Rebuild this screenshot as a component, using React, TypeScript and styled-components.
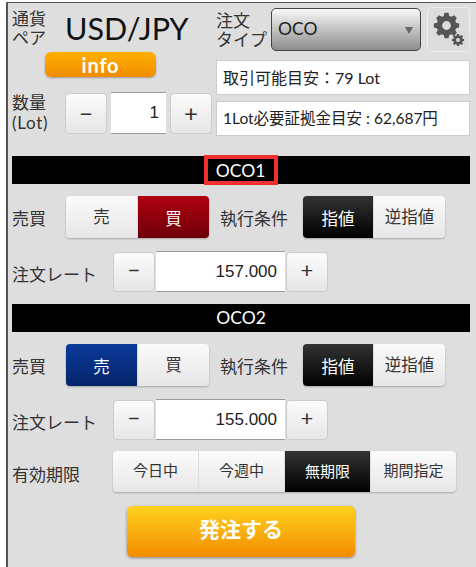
import styled, { createGlobalStyle } from "styled-components";

const gearPath = (cx: number, cy: number, outer: number, inner: number, hole: number) => {
  const teeth = 8;
  const pts: string[] = [];
  for (let i = 0; i < teeth; i++) {
    const a = (i / teeth) * Math.PI * 2;
    const step = (Math.PI * 2) / teeth;
    const list: [number, number][] = [
      [inner, a - step * 0.36],
      [outer, a - step * 0.2],
      [outer, a + step * 0.2],
      [inner, a + step * 0.36],
    ];
    list.forEach(([r, t]) => {
      pts.push(`${(cx + r * Math.cos(t)).toFixed(2)} ${(cy + r * Math.sin(t)).toFixed(2)}`);
    });
  }
  const ring = `M${cx - hole} ${cy}a${hole} ${hole} 0 1 0 ${hole * 2} 0a${hole} ${hole} 0 1 0 ${-hole * 2} 0Z`;
  return `M${pts.join("L")}Z${ring}`;
};

const Gear = () => (
  <svg width="32" height="36" viewBox="0 0 32 36">
    <path fillRule="evenodd" fill="#555" d={gearPath(13.5, 13.5, 12.8, 10, 4.4)} />
    <path fillRule="evenodd" fill="#555" d={gearPath(25, 28, 6.2, 4.7, 2)} />
  </svg>
);

const App = () => (
  <>
    <GlobalStyle />
    <Panel>
      <TopSection>
        <TopLeft>
          <PairRow>
            <SmallLabel $lh={19}>
              通貨
              <br />
              ペア
            </SmallLabel>
            <PairName>USD/JPY</PairName>
          </PairRow>
          <InfoButton>info</InfoButton>
          <QuantityRow>
            <SmallLabel $lh={20}>
              数量
              <br />
              <LotText>(Lot)</LotText>
            </SmallLabel>
            <QtyButton>−</QtyButton>
            <QtyInput>1</QtyInput>
            <QtyButton>+</QtyButton>
          </QuantityRow>
        </TopLeft>
        <TopRight>
          <TypeRow>
            <TypeLabel>
              注文
              <br />
              タイプ
            </TypeLabel>
            <SelectBox>
              OCO
              <SelectArrow />
            </SelectBox>
            <GearButton>
              <Gear />
            </GearButton>
          </TypeRow>
          <InfoBox $top={8} $size={16}>
            取引可能目安：79 Lot
          </InfoBox>
          <InfoBox $top={6} $size={15.5}>
            1Lot必要証拠金目安 : 62,687円
          </InfoBox>
        </TopRight>
      </TopSection>

      <Bar $top={22}>
        <Highlighted>OCO1</Highlighted>
      </Bar>
      <OrderRow $top={12}>
        <RowLabel $width={54}>売買</RowLabel>
        <Segment>
          <SegItem $w={72}>売</SegItem>
          <SegItem $w={71} $tone="red">
            買
          </SegItem>
        </Segment>
        <MidLabel>執行条件</MidLabel>
        <Segment>
          <SegItem $w={71} $tone="black">
            指値
          </SegItem>
          <SegItem $w={71}>逆指値</SegItem>
        </Segment>
      </OrderRow>
      <OrderRow $top={13}>
        <RateLabel>注文レート</RateLabel>
        <Stepper>−</Stepper>
        <RateInput>157.000</RateInput>
        <Stepper>+</Stepper>
      </OrderRow>

      <Bar $top={12}>OCO2</Bar>
      <OrderRow $top={12}>
        <RowLabel $width={54}>売買</RowLabel>
        <Segment>
          <SegItem $w={72} $tone="blue">
            売
          </SegItem>
          <SegItem $w={71}>買</SegItem>
        </Segment>
        <MidLabel>執行条件</MidLabel>
        <Segment>
          <SegItem $w={71} $tone="black">
            指値
          </SegItem>
          <SegItem $w={71}>逆指値</SegItem>
        </Segment>
      </OrderRow>
      <OrderRow $top={13}>
        <RateLabel>注文レート</RateLabel>
        <Stepper>−</Stepper>
        <RateInput>155.000</RateInput>
        <Stepper>+</Stepper>
      </OrderRow>
      <OrderRow $top={11}>
        <RateLabel>有効期限</RateLabel>
        <Segment>
          <SegItem $w={86} $small>
            今日中
          </SegItem>
          <SegItem $w={86} $small>
            今週中
          </SegItem>
          <SegItem $w={86} $small $tone="black">
            無期限
          </SegItem>
          <SegItem $w={85} $small>
            期間指定
          </SegItem>
        </Segment>
      </OrderRow>
      <SubmitButton>発注する</SubmitButton>
    </Panel>
  </>
);

const GlobalStyle = createGlobalStyle`
  html, body {
    margin: 0;
    background: #fff;
  }
  body {
    font-family: Lato, "Noto Sans CJK JP", sans-serif;
    color: #222;
  }
`;

const lightGradient = "linear-gradient(#fbfbfb, #e6e6e6)";

const Panel = styled.div`
  box-sizing: border-box;
  margin: 2px 0 0 6px;
  height: 565px;
  padding: 0 6px 0 4px;
  background: #dedede;
  border-top: 1px solid #555;
  border-left: 2px solid #555;
  overflow: hidden;
`;

const TopSection = styled.div`
  display: flex;
  height: 131px;
`;

const TopLeft = styled.div`
  width: 204px;
  display: flex;
  flex-direction: column;
`;

const TopRight = styled.div`
  width: 254px;
  display: flex;
  flex-direction: column;
  padding-top: 4px;
`;

const PairRow = styled.div`
  display: flex;
  align-items: center;
  height: 47px;
  padding-top: 3px;
`;

const SmallLabel = styled.div<{ $lh: number }>`
  width: 53px;
  flex-shrink: 0;
  font-size: 17px;
  line-height: ${(p) => p.$lh}px;
  color: #333;
`;

const LotText = styled.span`
  letter-spacing: 0.7px;
`;

const PairName = styled.div`
  font-size: 30.5px;
  line-height: 36px;
  color: #111;
  white-space: nowrap;
`;

const InfoButton = styled.div`
  width: 111px;
  height: 25px;
  margin: 3px 0 0 33px;
  border-radius: 6px;
  background: linear-gradient(#ffb000, #f08c00);
  box-shadow: 0 1px 2px rgba(0, 0, 0, 0.3);
  color: #fff;
  font-size: 20px;
  font-weight: 700;
  letter-spacing: 0.8px;
  line-height: 27px;
  text-align: center;
`;

const QuantityRow = styled.div`
  display: flex;
  align-items: center;
  margin-top: 15px;
`;

const QtyButton = styled.div`
  box-sizing: border-box;
  width: 42px;
  height: 41px;
  border: 1px solid #ccc;
  border-radius: 4px;
  background: ${lightGradient};
  font-size: 24px;
  line-height: 37px;
  text-align: center;
  color: #333;
`;

const QtyInput = styled.div`
  box-sizing: border-box;
  width: 55px;
  height: 42px;
  margin: 0 4px;
  padding-right: 7px;
  background: #fff;
  border-top: 1px solid #999;
  border-bottom: 1px solid #999;
  font-family: "Liberation Sans", sans-serif;
  font-size: 17px;
  line-height: 40px;
  text-align: right;
  color: #222;
`;

const TypeRow = styled.div`
  display: flex;
  align-items: center;
  height: 45px;
`;

const TypeLabel = styled.div`
  width: 55px;
  flex-shrink: 0;
  font-size: 17px;
  line-height: 19px;
  color: #333;
`;

const SelectBox = styled.div`
  box-sizing: border-box;
  position: relative;
  width: 151px;
  height: 43px;
  padding-left: 6px;
  border: 1px solid #444;
  border-radius: 5px;
  background: linear-gradient(#f8f8f8, #8c8c8c);
  font-size: 17.5px;
  line-height: 39px;
  color: #222;
`;

const SelectArrow = styled.span`
  position: absolute;
  top: 18px;
  right: 7px;
  border-left: 4px solid transparent;
  border-right: 4px solid transparent;
  border-top: 7px solid #666;
`;

const GearButton = styled.div`
  box-sizing: border-box;
  width: 43px;
  height: 45px;
  margin-left: 6px;
  display: flex;
  align-items: center;
  justify-content: center;
  border: 1px solid #eee;
  border-radius: 5px;
  background: #dcdcdc;
`;

const InfoBox = styled.div<{ $top: number; $size: number }>`
  box-sizing: border-box;
  height: 35px;
  margin-top: ${(p) => p.$top}px;
  padding-left: 6px;
  background: #fff;
  border: 1px solid #ccc;
  font-size: ${(p) => p.$size}px;
  line-height: 33px;
  color: #222;
  white-space: nowrap;
`;

const Bar = styled.div<{ $top: number }>`
  width: 458px;
  height: 28px;
  margin-top: ${(p) => p.$top}px;
  display: flex;
  align-items: center;
  justify-content: center;
  background: #000;
  color: #fff;
  font-size: 17.5px;
  line-height: 26px;
`;

const Highlighted = styled.span`
  box-sizing: border-box;
  width: 74px;
  height: 30px;
  border: 4px solid #f03030;
  text-align: center;
  line-height: 23px;
  margin-left: -1px;
`;

const OrderRow = styled.div<{ $top: number }>`
  display: flex;
  align-items: center;
  margin-top: ${(p) => p.$top}px;
`;

const RowLabel = styled.div<{ $width: number }>`
  width: ${(p) => p.$width}px;
  flex-shrink: 0;
  font-size: 17px;
  color: #333;
  white-space: nowrap;
`;

const RateLabel = styled.div`
  width: 101px;
  flex-shrink: 0;
  padding-top: 4px;
  font-size: 17px;
  color: #333;
  white-space: nowrap;
`;

const MidLabel = styled.div`
  width: 83px;
  margin-left: 11px;
  font-size: 17px;
  color: #333;
  white-space: nowrap;
`;

const Segment = styled.div`
  display: flex;
  border-radius: 4px;
  overflow: hidden;
  box-shadow: 0 1px 2px rgba(0, 0, 0, 0.25);
`;

const toneBg = {
  red: "linear-gradient(#b00010, #6e0008)",
  blue: "linear-gradient(#0a3a9a, #05246a)",
  black: "linear-gradient(#333, #000)",
};

const SegItem = styled.div<{ $w: number; $tone?: keyof typeof toneBg; $small?: boolean }>`
  box-sizing: border-box;
  width: ${(p) => p.$w}px;
  height: ${(p) => (p.$small ? 41 : 42)}px;
  padding-top: ${(p) => (p.$tone ? (p.$small ? 1 : 2) : 0)}px;
  background: ${(p) => (p.$tone ? toneBg[p.$tone] : lightGradient)};
  border-right: 1px solid #ddd;
  color: ${(p) => (p.$tone ? "#fff" : "#333")};
  font-size: ${(p) => (p.$small ? 15 : 16.5)}px;
  line-height: ${(p) => (p.$small ? 39 : 42)}px;
  text-align: center;
  white-space: nowrap;
  &:last-child {
    border-right: none;
  }
`;

const Stepper = styled.div`
  box-sizing: border-box;
  width: 42px;
  height: 40px;
  border: 1px solid #ccc;
  border-radius: 4px;
  background: ${lightGradient};
  font-size: 22px;
  line-height: 34px;
  text-align: center;
  color: #333;
`;

const RateInput = styled.div`
  box-sizing: border-box;
  width: 129px;
  height: 41px;
  margin: 0 1px;
  padding-right: 8px;
  background: #fff;
  border-top: 1px solid #999;
  border-bottom: 1px solid #999;
  font-family: "Liberation Sans", sans-serif;
  font-size: 17px;
  line-height: 39px;
  text-align: right;
  color: #222;
`;

const SubmitButton = styled.div`
  width: 228px;
  height: 51px;
  margin: 14px 0 0 115px;
  border-radius: 5px;
  background: linear-gradient(#ffd21e, #f28c00);
  box-shadow: 0 1px 3px rgba(0, 0, 0, 0.4);
  color: #fff;
  font-size: 21px;
  font-weight: 700;
  line-height: 46px;
  text-align: center;
`;

export default App;
